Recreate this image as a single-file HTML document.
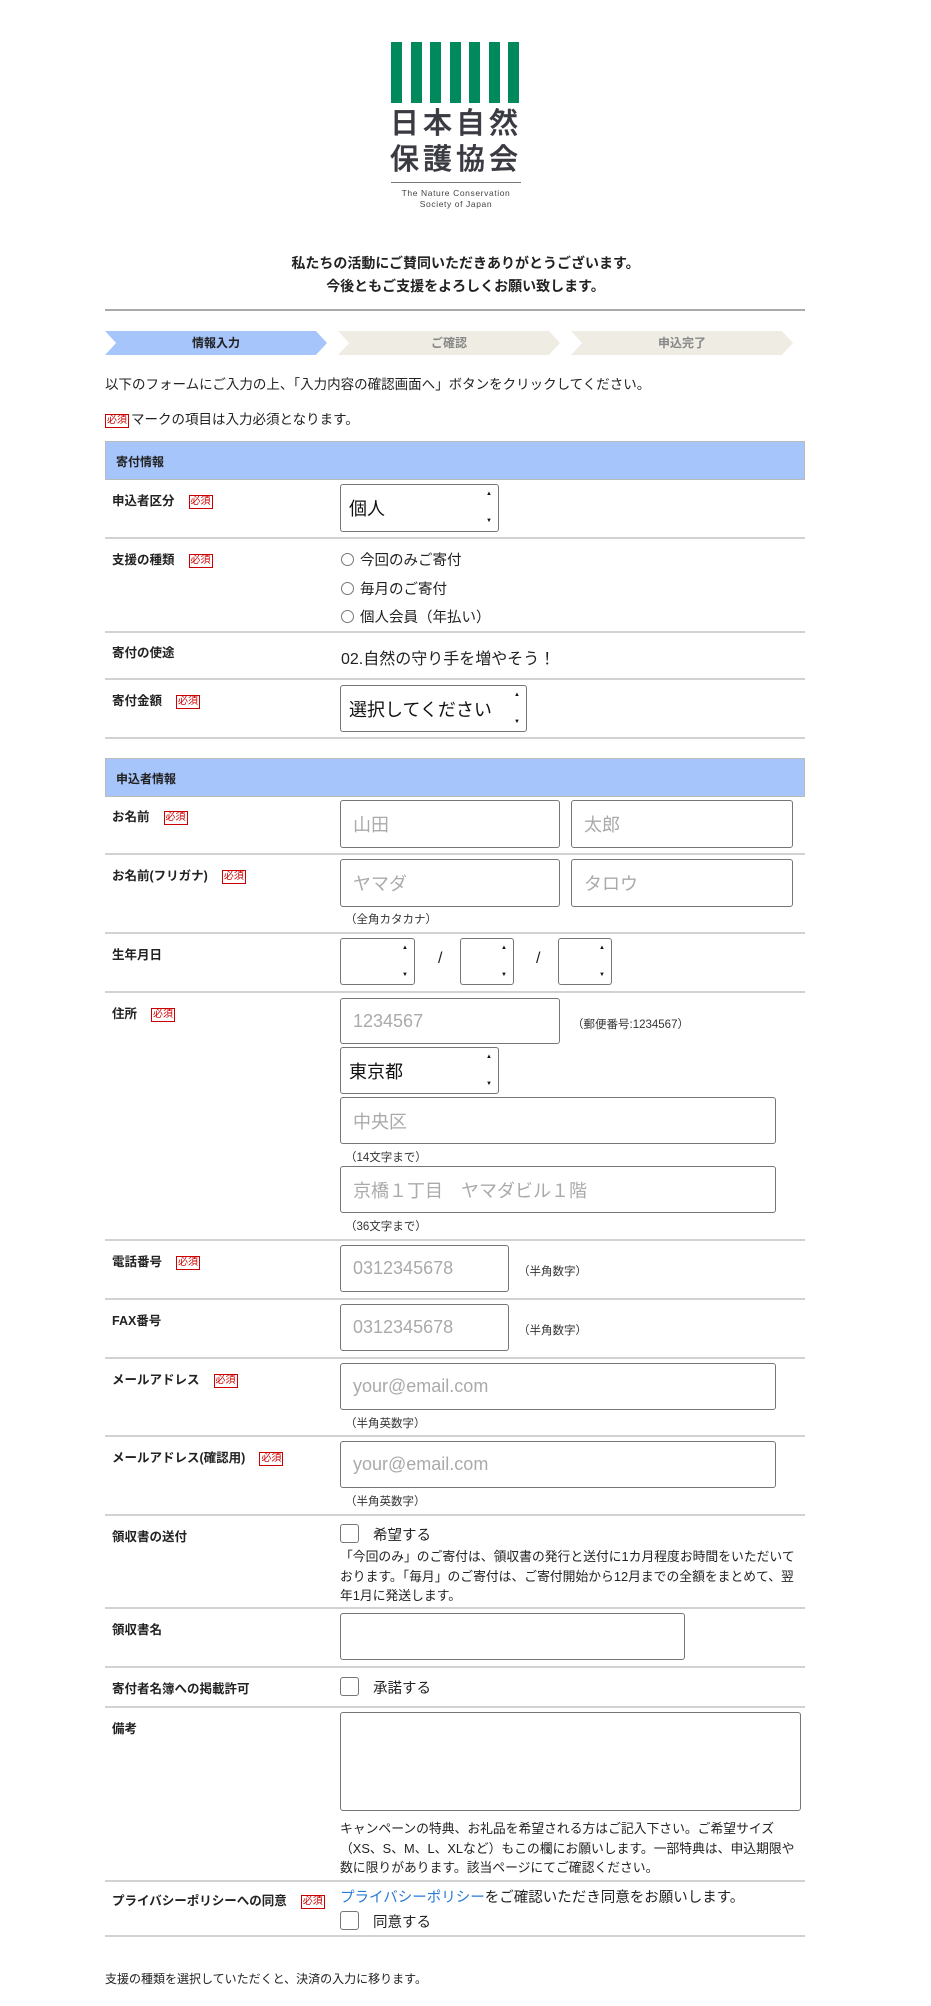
<!DOCTYPE html>
<html><head><meta charset="utf-8">
<style>
*{margin:0;padding:0;box-sizing:border-box}
body{width:931px;height:2006px;position:relative;background:#fff;font-family:"Liberation Sans","Noto Sans CJK JP",sans-serif;color:#222;overflow:hidden}
.a{position:absolute;white-space:nowrap}
.bar{position:absolute;top:42px;width:11px;height:61px;background:#00895c}
.lbl{position:absolute;left:112px;font-size:12.5px;font-weight:bold;color:#222;line-height:16px}
.req{display:inline-block;border:1px solid #c00;color:#c00;font-size:10px;line-height:12px;padding:0 1px;margin-left:14px;font-weight:normal;vertical-align:1px}
.sep{position:absolute;left:105px;width:700px;height:2px;background:#d2d2d2}
.box{position:absolute;border:1px solid #767676;border-radius:3px;background:#fff;font-size:18px;color:#aaa;padding-left:12px;display:flex;align-items:center}
.sel{color:#111;padding-left:8px}
.sel:after{content:"▲\A▼";white-space:pre;position:absolute;right:6px;top:50%;transform:translateY(-50%);font-size:6px;line-height:27px;color:#111}
.small{position:absolute;font-size:11.5px;color:#333}
.hd{position:absolute;left:105px;width:700px;height:39px;background:#a6c5fb;border:1px solid #bbb;font-size:12px;font-weight:bold;padding:11px 0 0 10px}
.cb{position:absolute;width:19px;height:19px;border:1px solid #767676;border-radius:3px;background:#fff}
.rad{display:inline-block;width:13px;height:13px;border:1px solid #777;border-radius:50%;vertical-align:-1px;margin-right:6px}
.step{position:absolute;top:331px;height:24px;width:222px;font-size:12px;font-weight:bold;text-align:center;line-height:24px;clip-path:polygon(0 0,95% 0,100% 50%,95% 100%,0 100%,5% 50%)}
.logo{position:absolute;left:390px;font-size:29px;letter-spacing:4px;color:#3a3a42;line-height:36px;font-weight:500;-webkit-text-stroke:.4px #3a3a42}
</style></head><body>
<div class="bar" style="left:391px"></div><div class="bar" style="left:411px"></div><div class="bar" style="left:430px"></div><div class="bar" style="left:450px"></div><div class="bar" style="left:469px"></div><div class="bar" style="left:489px"></div><div class="bar" style="left:508px"></div>
<div class="logo" style="top:106px">日本自然</div>
<div class="logo" style="top:142px">保護協会</div>
<div class="a" style="left:391px;top:182px;width:130px;height:1px;background:#777"></div>
<div class="a" style="left:391px;top:188px;width:130px;text-align:center;font-size:8.5px;letter-spacing:.6px;color:#444;line-height:11px">The Nature Conservation<br>Society of Japan</div>
<div class="a" style="left:0;width:931px;top:252px;text-align:center;font-size:14px;font-weight:bold;line-height:23px">私たちの活動にご賛同いただきありがとうございます。<br>今後ともご支援をよろしくお願い致します。</div>
<div class="a" style="left:105px;top:309px;width:700px;height:2px;background:#aaa"></div>
<div class="step" style="left:105px;background:#a6c5fb;color:#222">情報入力</div>
<div class="step" style="left:338px;background:#efede3;color:#888">ご確認</div>
<div class="step" style="left:571px;background:#efede3;color:#888">申込完了</div>
<div class="a" style="left:105px;top:373px;font-size:13.5px">以下のフォームにご入力の上、「入力内容の確認画面へ」ボタンをクリックしてください。</div>
<div class="a" style="left:105px;top:408px;font-size:13.5px"><span class="req" style="margin:0 2px 0 0">必須</span>マークの項目は入力必須となります。</div>

<div class="hd" style="top:441px">寄付情報</div>
<div class="lbl" style="top:493px">申込者区分<span class="req">必須</span></div>
<div class="box sel" style="left:340px;top:484px;width:159px;height:48px">個人</div>
<div class="sep" style="top:537px"></div>
<div class="lbl" style="top:552px">支援の種類<span class="req">必須</span></div>
<div class="a" style="left:341px;top:547px;font-size:14.5px;line-height:28.5px"><span class="rad"></span>今回のみご寄付<br><span class="rad"></span>毎月のご寄付<br><span class="rad"></span>個人会員（年払い）</div>
<div class="sep" style="top:631px"></div>
<div class="lbl" style="top:645px">寄付の使途</div>
<div class="a" style="left:341px;top:645px;font-size:16px">02.自然の守り手を増やそう！</div>
<div class="sep" style="top:678px"></div>
<div class="lbl" style="top:693px">寄付金額<span class="req">必須</span></div>
<div class="box sel" style="left:340px;top:685px;width:187px;height:47px">選択してください</div>
<div class="sep" style="top:737px"></div>

<div class="hd" style="top:758px">申込者情報</div>
<div class="lbl" style="top:809px">お名前<span class="req">必須</span></div>
<div class="box" style="left:340px;top:800px;width:220px;height:48px">山田</div>
<div class="box" style="left:571px;top:800px;width:222px;height:48px">太郎</div>
<div class="sep" style="top:853px"></div>
<div class="lbl" style="top:868px">お名前(フリガナ)<span class="req">必須</span></div>
<div class="box" style="left:340px;top:859px;width:220px;height:48px">ヤマダ</div>
<div class="box" style="left:571px;top:859px;width:222px;height:48px">タロウ</div>
<div class="small" style="left:345px;top:911px">（全角カタカナ）</div>
<div class="sep" style="top:932px"></div>
<div class="lbl" style="top:947px">生年月日</div>
<div class="box sel" style="left:340px;top:938px;width:75px;height:47px"></div>
<div class="a" style="left:438px;top:950px;font-size:16px">/</div>
<div class="box sel" style="left:460px;top:938px;width:54px;height:47px"></div>
<div class="a" style="left:536px;top:950px;font-size:16px">/</div>
<div class="box sel" style="left:558px;top:938px;width:54px;height:47px"></div>
<div class="sep" style="top:991px"></div>
<div class="lbl" style="top:1006px">住所<span class="req">必須</span></div>
<div class="box" style="left:340px;top:998px;width:220px;height:46px">1234567</div>
<div class="small" style="left:572px;top:1016px">（郵便番号:1234567）</div>
<div class="box sel" style="left:340px;top:1047px;width:159px;height:47px">東京都</div>
<div class="box" style="left:340px;top:1097px;width:436px;height:47px">中央区</div>
<div class="small" style="left:345px;top:1149px">（14文字まで）</div>
<div class="box" style="left:340px;top:1166px;width:436px;height:47px">京橋１丁目　ヤマダビル１階</div>
<div class="small" style="left:345px;top:1218px">（36文字まで）</div>
<div class="sep" style="top:1239px"></div>
<div class="lbl" style="top:1254px">電話番号<span class="req">必須</span></div>
<div class="box" style="left:340px;top:1245px;width:169px;height:47px">0312345678</div>
<div class="small" style="left:518px;top:1263px">（半角数字）</div>
<div class="sep" style="top:1298px"></div>
<div class="lbl" style="top:1313px">FAX番号</div>
<div class="box" style="left:340px;top:1304px;width:169px;height:47px">0312345678</div>
<div class="small" style="left:518px;top:1322px">（半角数字）</div>
<div class="sep" style="top:1357px"></div>
<div class="lbl" style="top:1372px">メールアドレス<span class="req">必須</span></div>
<div class="box" style="left:340px;top:1363px;width:436px;height:47px">your@email.com</div>
<div class="small" style="left:345px;top:1415px">（半角英数字）</div>
<div class="sep" style="top:1435px"></div>
<div class="lbl" style="top:1450px">メールアドレス(確認用)<span class="req">必須</span></div>
<div class="box" style="left:340px;top:1441px;width:436px;height:47px">your@email.com</div>
<div class="small" style="left:345px;top:1493px">（半角英数字）</div>
<div class="sep" style="top:1514px"></div>
<div class="lbl" style="top:1529px">領収書の送付</div>
<div class="cb" style="left:340px;top:1524px"></div>
<div class="a" style="left:373px;top:1524px;font-size:14.5px">希望する</div>
<div class="a" style="left:340px;top:1547px;font-size:12.8px;line-height:19.5px;white-space:normal;width:462px">「今回のみ」のご寄付は、領収書の発行と送付に1カ月程度お時間をいただいております。「毎月」のご寄付は、ご寄付開始から12月までの全額をまとめて、翌年1月に発送します。</div>
<div class="sep" style="top:1607px"></div>
<div class="lbl" style="top:1622px">領収書名</div>
<div class="box" style="left:340px;top:1613px;width:345px;height:47px"></div>
<div class="sep" style="top:1666px"></div>
<div class="lbl" style="top:1681px">寄付者名簿への掲載許可</div>
<div class="cb" style="left:340px;top:1677px"></div>
<div class="a" style="left:373px;top:1677px;font-size:14.5px">承諾する</div>
<div class="sep" style="top:1706px"></div>
<div class="lbl" style="top:1721px">備考</div>
<div class="box" style="left:340px;top:1712px;width:461px;height:99px"></div>
<div class="a" style="left:340px;top:1819px;font-size:12.8px;line-height:19.5px;white-space:normal;width:463px">キャンペーンの特典、お礼品を希望される方はご記入下さい。ご希望サイズ（XS、S、M、L、XLなど）もこの欄にお願いします。一部特典は、申込期限や数に限りがあります。該当ページにてご確認ください。</div>
<div class="sep" style="top:1880px"></div>
<div class="lbl" style="top:1893px">プライバシーポリシーへの同意<span class="req">必須</span></div>
<div class="a" style="left:340px;top:1886px;font-size:14.5px"><span style="color:#2a7bd6">プライバシーポリシー</span>をご確認いただき同意をお願いします。</div>
<div class="cb" style="left:340px;top:1911px"></div>
<div class="a" style="left:373px;top:1911px;font-size:14.5px">同意する</div>
<div class="sep" style="top:1935px"></div>
<div class="a" style="left:105px;top:1970px;font-size:12px">支援の種類を選択していただくと、決済の入力に移ります。</div>
</body></html>
